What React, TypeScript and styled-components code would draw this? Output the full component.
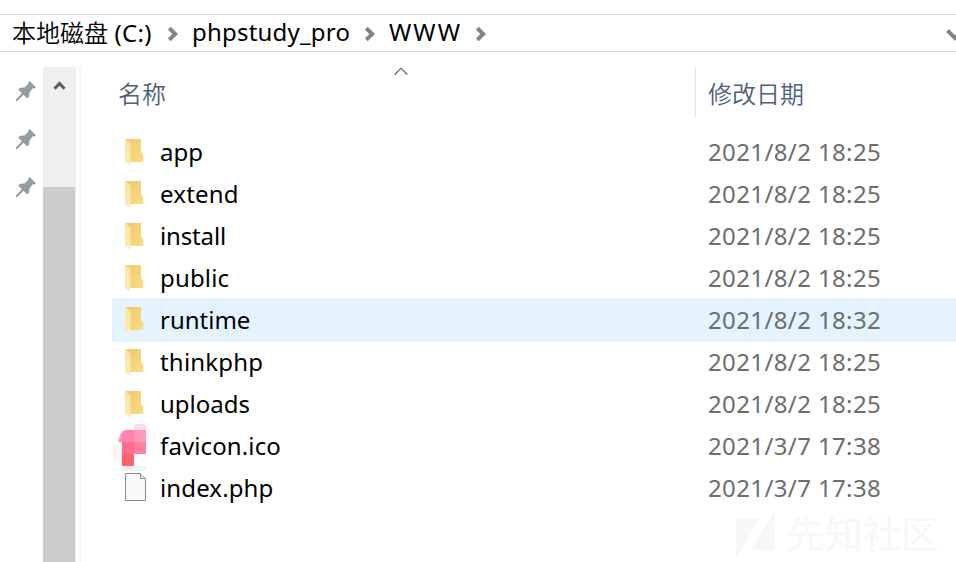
import React from "react";
import styled, { createGlobalStyle } from "styled-components";

const GlobalStyle = createGlobalStyle`
  * { box-sizing: border-box; }
  body { margin: 0; background: #fff; overflow: hidden; }
`;

const Window = styled.div`
  position: relative;
  width: 956px;
  height: 562px;
  padding-top: 14px;
  overflow: hidden;
  background: #fff;
  color: #000;
  font-family: "Noto Sans", "Noto Sans CJK SC", sans-serif;
  font-size: 24px;
  line-height: 36px;
  white-space: pre;
`;

const AddressBar = styled.nav`
  display: flex;
  align-items: center;
  height: 38px;
  padding-left: 12px;
  border-top: 1px solid #d9d9d9;
  border-bottom: 1px solid #d9d9d9;
`;

const Crumb = styled.span<{ $width: number; $spacing?: number }>`
  flex: none;
  width: ${(p) => p.$width}px;
  margin-top: -2px;
  letter-spacing: ${(p) => p.$spacing ?? 0}px;
`;

const Han = styled.span`
  font-family: "Noto Sans CJK SC", sans-serif;
  font-weight: 350;
  letter-spacing: 0;
`;

const CrumbArrow = styled.svg`
  flex: none;
  width: 10px;
  height: 14px;
  margin: 1px 14px 0 15px;
`;

const HistoryArrow = styled.svg`
  flex: none;
  width: 18px;
  height: 12px;
  margin: 3px -8px 0 auto;
`;

const Body = styled.div`
  display: flex;
  height: 510px;
  padding-top: 15px;
`;

const PinRail = styled.div`
  display: flex;
  flex-direction: column;
  gap: 28px;
  width: 43px;
  padding: 14px 0 0 16px;
`;

const PinIcon = styled.svg`
  display: block;
  width: 20px;
  height: 20px;
`;

const Scrollbar = styled.div`
  display: flex;
  flex-direction: column;
  width: 33px;
  background: #efefef;
`;

const ScrollUp = styled.svg`
  flex: none;
  width: 33px;
  height: 120px;
`;

const Thumb = styled.div`
  flex: 1;
  width: 32px;
  background: #cccccc;
`;

const Splitter = styled.div`
  width: 2px;
  margin-left: 3px;
  background: #f6f6f6;
`;

const FileList = styled.main`
  flex: 1;
  padding-left: 31px;
`;

const ColumnHeads = styled.div`
  display: flex;
  height: 51px;
  margin-bottom: 12px;
  color: #4c607a;
`;

const NameHead = styled.div`
  display: flex;
  width: 584px;
  padding: 8px 0 0 6px;
  border-right: 1px solid #e2e2e2;
`;

const SortArrow = styled.svg`
  width: 14px;
  height: 8px;
  margin: -8px 0 0 227.5px;
`;

const DateHead = styled.div`
  padding: 8px 0 0 12px;
`;

const Row = styled.div<{ $active?: boolean }>`
  display: flex;
  align-items: center;
  height: ${(p) => (p.$active ? 44 : 42)}px;
  margin-bottom: ${(p) => (p.$active ? -2 : 0)}px;
  padding-top: ${(p) => (p.$active ? 0 : 2)}px;
  background: ${(p) => (p.$active ? "#e5f3ff" : "transparent")};
`;

const IconCell = styled.div`
  width: 48px;
  height: 40px;
  margin-top: -2px;
`;

const IconArt = styled.svg`
  display: block;
  overflow: visible;
  width: 48px;
  height: 40px;
`;

const FileName = styled.span<{ $spacing?: number }>`
  width: 548px;
  letter-spacing: ${(p) => p.$spacing ?? 0}px;
`;

const FileDate = styled.span`
  color: #6d6d6d;
  letter-spacing: 0.38px;
`;

const Watermark = styled.div`
  position: absolute;
  left: 736px;
  top: 507px;
  display: flex;
  align-items: center;
  gap: 12px;
  height: 52px;
  color: #f7f7f7;
  font-size: 38px;
`;

const WatermarkLogo = styled.svg`
  width: 39px;
  height: 48px;
  margin-top: 2px;
`;

type Kind = "folder" | "favicon" | "file";

const files: { name: string; date: string; kind: Kind; spacing?: number; active?: boolean }[] = [
  { name: "app", date: "2021/8/2 18:25", kind: "folder" },
  { name: "extend", date: "2021/8/2 18:25", kind: "folder", spacing: 0.2 },
  { name: "install", date: "2021/8/2 18:25", kind: "folder", spacing: -0.15 },
  { name: "public", date: "2021/8/2 18:25", kind: "folder", spacing: 0.15 },
  { name: "runtime", date: "2021/8/2 18:32", kind: "folder", active: true },
  { name: "thinkphp", date: "2021/8/2 18:25", kind: "folder", spacing: 0.2 },
  { name: "uploads", date: "2021/8/2 18:25", kind: "folder" },
  { name: "favicon.ico", date: "2021/3/7 17:38", kind: "favicon", spacing: 0.12 },
  { name: "index.php", date: "2021/3/7 17:38", kind: "file", spacing: 0.12 },
];

const Chevron = () => (
  <CrumbArrow viewBox="0 0 10 14">
    <path d="M1.3 1.2 7.2 7 1.3 12.8" fill="none" stroke="#838383" strokeWidth="4" />
  </CrumbArrow>
);

const Pin = () => (
  <PinIcon viewBox="0 0 20 20">
    <path
      fill="#919ca3"
      d="M13.5 0 20 6.3 18.6 7.6 17.2 7 13.4 11.4 13.2 15.2 11.4 17.4 7.6 13.8 1.2 20 0 20 0 18.4 5.9 12.2 2.2 8.8 4.2 6.8 8.4 6.6 12.6 2.6 12.2 1.2Z"
    />
  </PinIcon>
);

const FileIcon = ({ kind }: { kind: Kind }) => (
  <IconArt viewBox="0 0 48 40">
    {kind === "folder" && (
      <>
        <defs>
          <linearGradient id="back" x1="0" y1="0" x2="1" y2="1">
            <stop offset="0" stopColor="#eec96b" />
            <stop offset="1" stopColor="#fbdc83" />
          </linearGradient>
          <linearGradient id="flap" x1="0" y1="0" x2="0" y2="1">
            <stop offset="0" stopColor="#fbe3a3" />
            <stop offset="1" stopColor="#ffebb8" />
          </linearGradient>
        </defs>
        <path fill="url(#back)" d="M14 8H29V21L31.3 24V31H14Z" />
        <path fill="url(#flap)" d="M13 8 18.5 12V34.7L13 31Z" />
      </>
    )}
    {kind === "favicon" && (
      <>
        <path fill="#fff2f1" d="M-2 29C0 23 4 19 10 17V29Z" />
        <path fill="#ffdbe9" d="M22 5V1Q22-1 25-1H31Q34-1 34 1V5Z" />
        <path fill="#fdfaf8" d="M34 5H41L45 17H34Z" />
        <path fill="#ff94bb" d="M6 17 8 10 11 6V17Z" />
        <path fill="#ff82b1" d="M10 7 13 5H22V17H10Z" />
        <path fill="#ff9abd" d="M22 5H34V17H22Z" />
        <path fill="#ff6c91" d="M10 17H22V29H10Z" />
        <path fill="#ff809f" d="M22 17H34V29H22Z" />
        <path fill="#ff626d" d="M10 29H22V41H10Z" />
        <path fill="#fff5f4" d="M0 29H10V41Z" />
        <path fill="#f2f2f2" d="M10 41H34V44L30 46H10Z" />
      </>
    )}
    {kind === "file" && (
      <>
        <path fill="#f8fafb" stroke="#8b8b8b" d="M13.5 6.5H28.5L33.5 11.5V33.5H13.5Z" />
        <path fill="#e4e6e7" stroke="#8b8b8b" d="M28.5 6.5V11.5H33.5" />
      </>
    )}
  </IconArt>
);

export default function App() {
  return (
    <Window>
      <GlobalStyle />
      <AddressBar>
        <Crumb $width={141} $spacing={0.3}>
          <Han>本地磁盘</Han> (C:)
        </Crumb>
        <Chevron />
        <Crumb $width={158} $spacing={0.2}>phpstudy_pro</Crumb>
        <Chevron />
        <Crumb $width={72} $spacing={2}>WWW</Crumb>
        <Chevron />
        <HistoryArrow viewBox="0 0 18 12">
          <path d="M1.5 1.5 9 9 16.5 1.5" fill="none" stroke="#838383" strokeWidth="4" />
        </HistoryArrow>
      </AddressBar>
      <Body>
        <PinRail>
          <Pin />
          <Pin />
          <Pin />
        </PinRail>
        <Scrollbar>
          <ScrollUp viewBox="0 0 33 120">
            <path d="M11.5 21.7 16.5 16.5 21.5 21.7" fill="none" stroke="#5c5c5c" strokeWidth="3" />
          </ScrollUp>
          <Thumb />
        </Scrollbar>
        <Splitter />
        <FileList>
          <ColumnHeads>
            <NameHead>
              <Han>名称</Han>
              <SortArrow viewBox="0 0 14 8">
                <path d="M.8 7.5 7 1.2 13.2 7.5" fill="none" stroke="#555" strokeWidth="1.1" />
              </SortArrow>
            </NameHead>
            <DateHead>
              <Han>修改日期</Han>
            </DateHead>
          </ColumnHeads>
          {files.map((f) => (
            <Row key={f.name} $active={f.active}>
              <IconCell>
                <FileIcon kind={f.kind} />
              </IconCell>
              <FileName $spacing={f.spacing}>{f.name}</FileName>
              <FileDate>{f.date}</FileDate>
            </Row>
          ))}
        </FileList>
      </Body>
      <Watermark>
        <WatermarkLogo viewBox="0 0 39 48">
          <path fill="#f7f7f7" d="M0 8H24L0 48ZM39 0V40H15Z" />
        </WatermarkLogo>
        先知社区
      </Watermark>
    </Window>
  );
}
